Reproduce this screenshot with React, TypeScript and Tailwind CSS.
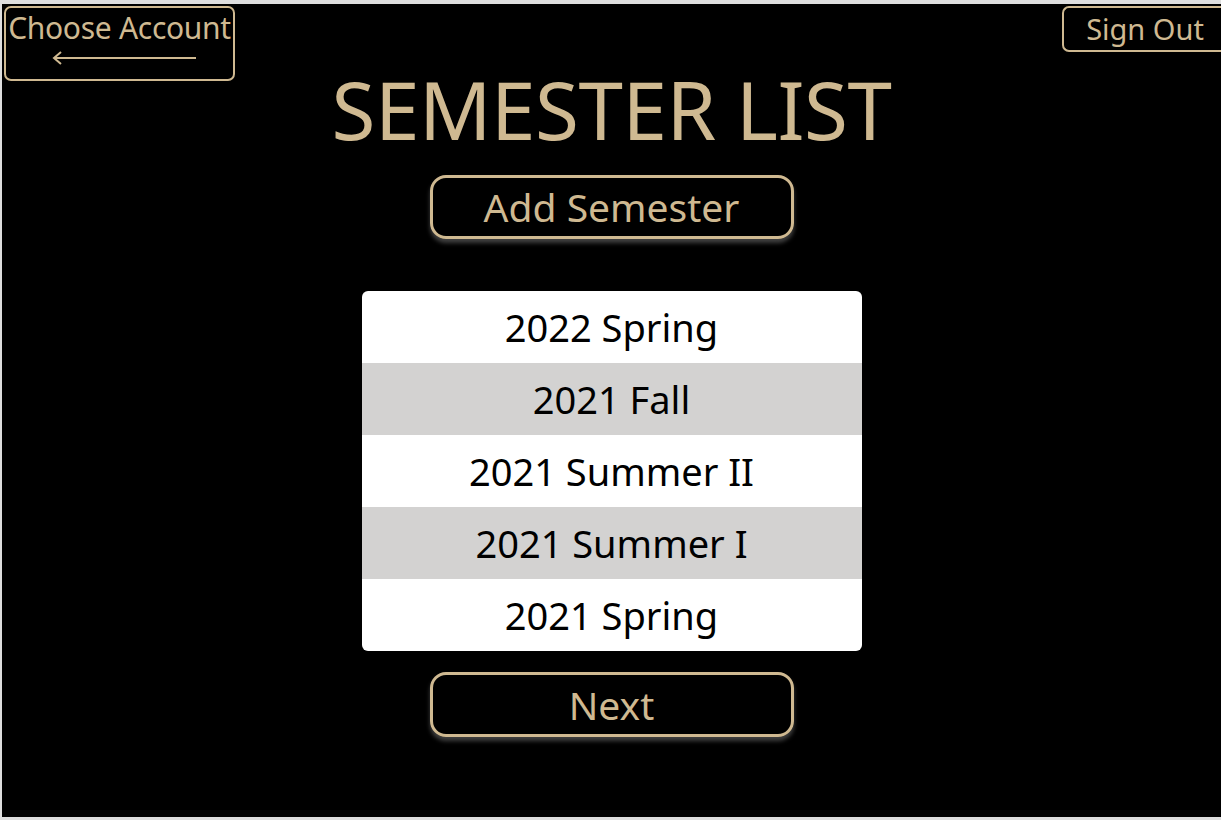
import React from 'react';

const semesters = ['2022 Spring', '2021 Fall', '2021 Summer II', '2021 Summer I', '2021 Spring'];

const font = { fontFamily: '"Noto Sans", "Open Sans", sans-serif' };

export default function App() {
  return (
    <div className="w-[1221px] h-[820px] bg-[#dedede] pt-[4px] pl-[2px] pb-[3px]" style={font}>
      <div className="h-full bg-black flex flex-col items-center relative">
        {/* top bar */}
        <div className="w-full flex justify-between items-start pt-[2px] pl-[2px]">
          <button className="w-[231px] h-[75px] border-2 border-[#cfb991] rounded-[7px] flex flex-col items-center text-[#cfb991] pt-[2px]">
            <span className="text-[30px] leading-[36px] tracking-[-0.3px]">Choose Account</span>
            <svg width="146" height="14" viewBox="0 0 146 14" className="mt-[5px] ml-[10px]">
              <path d="M2 7 H144 M9 1 L2 7 L9 13" stroke="#cfb991" strokeWidth="2" fill="none" />
            </svg>
          </button>
          <button className="w-[160px] h-[46px] border-2 border-r-0 border-[#cfb991] rounded-l-[7px] text-[#cfb991] text-[29px] leading-[40px] pl-[4px] -mr-[1px]">
            Sign Out
          </button>
        </div>

        <h1 className="text-[#cfb991] text-[80px] leading-[90px] -mt-[17px] tracking-[-0.5px]">SEMESTER LIST</h1>

        <button className="mt-[21px] w-[364px] h-[64px] border-[3px] border-[#cfb991] rounded-[16px] text-[#cfb991] text-[39px] leading-[50px] shadow-[0_4px_4px_rgba(255,255,255,0.25)]">
          Add Semester
        </button>

        <div className="mt-[52px] w-[500px] rounded-[6px] overflow-hidden">
          {semesters.map((s, i) => (
            <div
              key={s}
              className={`h-[72px] flex items-center justify-center text-black text-[38px] ${i % 2 === 1 ? 'bg-[#d3d2d1]' : 'bg-white'}`}
            >
              {s}
            </div>
          ))}
        </div>

        <button className="mt-[21px] w-[364px] h-[65px] border-[3px] border-[#cfb991] rounded-[16px] text-[#cfb991] text-[39px] leading-[50px] shadow-[0_4px_4px_rgba(255,255,255,0.25)]">
          Next
        </button>
      </div>
    </div>
  );
}
